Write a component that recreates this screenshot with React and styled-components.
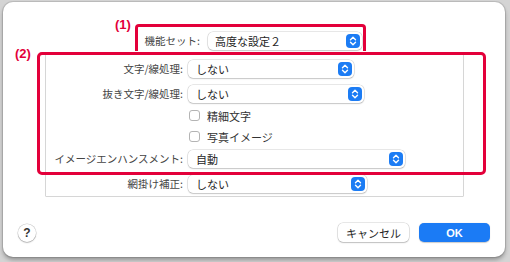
import React from "react";
import styled, { createGlobalStyle } from "styled-components";

const Global = createGlobalStyle`
  html, body { margin: 0; padding: 0; }
  body {
    background: #d4d4d4;
    font-family: "Noto Sans CJK JP", "Noto Sans", sans-serif;
    -webkit-font-smoothing: antialiased;
  }
`;

const Page = styled.div`
  width: 510px;
  height: 262px;
  box-sizing: border-box;
  padding: 2px 5px 5px 3px;
`;

const Dialog = styled.div`
  position: relative;
  width: 502px;
  height: 255px;
  box-sizing: border-box;
  background: #ffffff;
  border-radius: 10px;
  box-shadow: 0 0 0 1px rgba(0, 0, 0, 0.1), 0 3px 4px rgba(0, 0, 0, 0.3);
  padding-top: 28px;
  display: flex;
  flex-direction: column;
`;

const Row = styled.div`
  display: flex;
  align-items: center;
  height: 21px;
  margin-left: ${(p) => p.$indent || 0}px;
  gap: ${(p) => p.$gap || 5}px;
`;

const Label = styled.div`
  width: ${(p) => p.$width}px;
  text-align: right;
  font-size: 10.5px;
  color: #454545;
  white-space: nowrap;
`;

const Popup = styled.div`
  position: relative;
  width: ${(p) => p.$width}px;
  height: 18px;
  box-sizing: border-box;
  border-radius: 5px;
  background: #fff;
  box-shadow: 0 0 0 0.5px rgba(0, 0, 0, 0.18), 0 1px 1.5px rgba(0, 0, 0, 0.15);
  display: flex;
  align-items: center;
  padding-left: ${(p) => p.$pad || 8}px;
  font-size: 11px;
  color: #262626;
`;

const Stepper = styled.div`
  position: absolute;
  right: 2px;
  top: 2px;
  width: 14px;
  height: 14px;
  border-radius: 4px;
  background: #1c7cf4;
  display: flex;
  align-items: center;
  justify-content: center;
`;

const Panel = styled.div`
  margin: 2px 41px 0 42px;
  border: 1px solid #d6d6d6;
  border-radius: 1px;
  padding: 4px 0 2px 0;
  display: flex;
  flex-direction: column;
  gap: 4px;
`;

const CheckList = styled.div`
  display: flex;
  flex-direction: column;
  gap: 4px;
  margin: -1px 0;
`;

const CheckRow = styled.label`
  display: flex;
  align-items: center;
  height: 17px;
  padding-left: 143px;
  gap: 7px;
  font-size: 11px;
  color: #333;
`;

const Box = styled.span`
  width: 11px;
  height: 11px;
  box-sizing: border-box;
  border: 1px solid #b4b4b4;
  border-radius: 3px;
  background: #fff;
`;

const Footer = styled.div`
  margin: 26px 15px 0 15px;
  display: flex;
  align-items: center;
  height: 19px;
`;

const HelpButton = styled.div`
  width: 18px;
  height: 18px;
  border-radius: 50%;
  background: #fff;
  box-shadow: 0 0 0 0.5px rgba(0, 0, 0, 0.2), 0 1px 1.5px rgba(0, 0, 0, 0.2);
  display: flex;
  align-items: center;
  justify-content: center;
  font-family: "Liberation Sans", Arial, sans-serif;
  font-weight: bold;
  font-size: 12px;
  color: #333;
`;

const Spacer = styled.div`
  flex: 1;
`;

const Button = styled.div`
  width: 71px;
  height: 19px;
  border-radius: 5px;
  display: flex;
  align-items: center;
  justify-content: center;
  font-size: 11px;
  margin-left: ${(p) => p.$ml || 0}px;
  background: ${(p) => (p.$primary ? "#1b7bf5" : "#ffffff")};
  color: ${(p) => (p.$primary ? "#ffffff" : "#262626")};
  box-shadow: ${(p) =>
    p.$primary
      ? "0 0.5px 1px rgba(0,0,0,0.2)"
      : "0 0 0 0.5px rgba(0,0,0,0.18), 0 1px 1.5px rgba(0,0,0,0.18)"};
  font-family: ${(p) =>
    p.$primary
      ? '"Liberation Sans", Arial, sans-serif'
      : '"Noto Sans CJK JP", sans-serif'};
  font-weight: ${(p) => (p.$primary ? "bold" : "normal")};
`;

const RedBox = styled.div`
  position: absolute;
  left: ${(p) => p.$x}px;
  top: ${(p) => p.$y}px;
  width: ${(p) => p.$w}px;
  height: ${(p) => p.$h}px;
  box-sizing: border-box;
  border: 3px solid #e3003a;
  border-bottom: ${(p) => (p.$open ? "none" : "3px solid #e3003a")};
  border-radius: ${(p) => (p.$open ? "4px 4px 0 0" : "5px")};
  pointer-events: none;
`;

const Tag = styled.div`
  position: absolute;
  left: ${(p) => p.$x}px;
  top: ${(p) => p.$y}px;
  font-family: "Liberation Sans", Arial, sans-serif;
  font-weight: bold;
  font-size: 13px;
  line-height: 14px;
  color: #e3003a;
`;

const Chevrons = () => (
  <svg width="14" height="14" viewBox="0 0 14 14">
    <path
      d="M4.5 5.7 L7 3.2 L9.5 5.7 M4.5 8.3 L7 10.8 L9.5 8.3"
      fill="none"
      stroke="#fff"
      strokeWidth="1.4"
      strokeLinecap="round"
      strokeLinejoin="round"
    />
  </svg>
);

const Select = ({ width, value, pad }) => (
  <Popup $width={width} $pad={pad}>
    {value}
    <Stepper>
      <Chevrons />
    </Stepper>
  </Popup>
);

const panelRows = [
  { label: "文字/線処理:", value: "しない", width: 166 },
  { label: "抜き文字/線処理:", value: "しない", width: 176 },
];
const lowerRows = [
  { label: "イメージエンハンスメント:", value: "自動", width: 217 },
  { label: "網掛け補正:", value: "しない", width: 179 },
];

export default function App() {
  return (
    <>
      <Global />
      <Page>
        <Dialog>
          <Row $indent={97} $gap={8}>
            <Label $width={100}>機能セット:</Label>
            <Select width={154} value="高度な設定２" pad={7} />
          </Row>
          <Panel>
            {panelRows.map((r) => (
              <Row key={r.label}>
                <Label $width={137}>{r.label}</Label>
                <Select width={r.width} value={r.value} />
              </Row>
            ))}
            <CheckList>
              <CheckRow>
                <Box />
                精細文字
              </CheckRow>
              <CheckRow>
                <Box />
                写真イメージ
              </CheckRow>
            </CheckList>
            {lowerRows.map((r) => (
              <Row key={r.label}>
                <Label $width={137}>{r.label}</Label>
                <Select width={r.width} value={r.value} />
              </Row>
            ))}
          </Panel>
          <Footer>
            <HelpButton>?</HelpButton>
            <Spacer />
            <Button>キャンセル</Button>
            <Button $primary $ml={10}>
              OK
            </Button>
          </Footer>
          <RedBox $x={132} $y={22} $w={231} $h={27} $open />
          <RedBox $x={34} $y={50} $w={449} $h={123} />
          <Tag $x={112} $y={16}>(1)</Tag>
          <Tag $x={12} $y={45}>(2)</Tag>
        </Dialog>
      </Page>
    </>
  );
}
